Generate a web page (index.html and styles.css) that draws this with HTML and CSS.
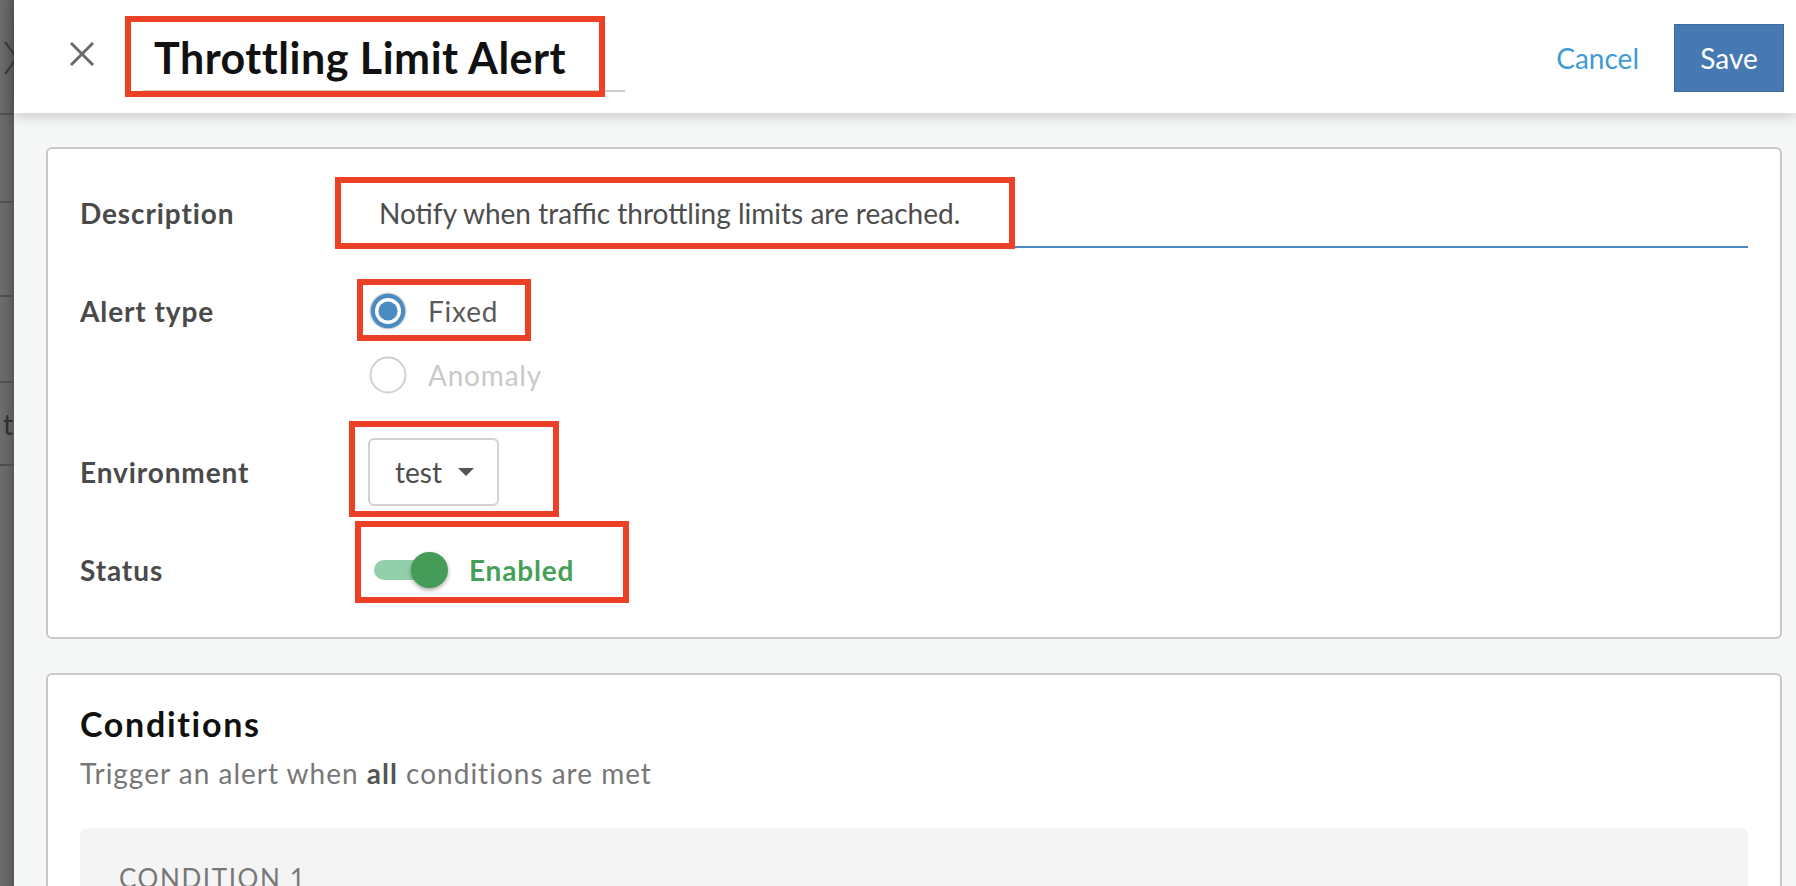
FILE: index.html
```html
<!DOCTYPE html>
<html lang="en">
<head>
<meta charset="utf-8">
<title>Throttling Limit Alert</title>
<link rel="stylesheet" href="styles.css">
</head>
<body>
<div class="screen">
  <aside class="backdrop">
    <div class="bd-row bd-row-1">
      <svg class="bd-x" width="14" height="113" viewBox="0 0 14 113"><path d="M5 42 L17 58 L5 74" fill="none" stroke="#3c3c3c" stroke-width="2.2"/></svg>
    </div>
    <div class="bd-row bd-row-2"></div>
    <div class="bd-row bd-row-3"></div>
    <div class="bd-row bd-row-4"></div>
    <div class="bd-row bd-row-5"><span class="bd-text">t</span></div>
  </aside>

  <div class="panel">
    <header class="topbar">
      <button class="close" aria-label="Close">
        <svg width="26" height="26" viewBox="0 0 26 26"><path d="M2 2 L24 24 M24 2 L2 24" stroke="#6a6a6a" stroke-width="3" fill="none"/></svg>
      </button>
      <div class="title-field">Throttling Limit Alert</div>
      <div class="spacer"></div>
      <a class="cancel">Cancel</a>
      <button class="save">Save</button>
    </header>

    <main class="content">
      <section class="card settings">
        <div class="label row-desc">Description</div>
        <div class="text-field row-desc">Notify when traffic throttling limits are reached.</div>

        <div class="label row-type">Alert type</div>
        <div class="radio-group">
          <div class="option">
            <svg width="38" height="38" viewBox="0 0 38 38"><circle cx="19" cy="19" r="18.5" fill="#cfcfcf"/><circle cx="19" cy="19" r="17.2" fill="#4a8cc2"/><circle cx="19" cy="19" r="13" fill="#ffffff"/><circle cx="19" cy="19" r="9.6" fill="#4a8cc2"/></svg>
            <span class="opt-text">Fixed</span>
          </div>
          <div class="option disabled">
            <svg width="38" height="38" viewBox="0 0 38 38"><circle cx="19" cy="19" r="17.5" fill="#ffffff" stroke="#d0d0d0" stroke-width="2"/></svg>
            <span class="opt-text">Anomaly</span>
          </div>
        </div>

        <div class="label row-env">Environment</div>
        <div class="field-cell">
          <div class="select">
            <span>test</span>
            <svg class="caret" width="16" height="8" viewBox="0 0 16 8"><path d="M0 0 H16 L8 8 Z" fill="#555"/></svg>
          </div>
        </div>

        <div class="label row-status">Status</div>
        <div class="field-cell status-cell">
          <div class="switch">
            <div class="track"></div>
            <div class="knob"></div>
          </div>
          <span class="enabled">Enabled</span>
        </div>
      </section>

      <section class="card conditions">
        <h2 class="cond-title">Conditions</h2>
        <p class="cond-sub">Trigger an alert when <b>all</b> conditions are met</p>
        <div class="cond-box">
          <div class="cond-name">CONDITION 1</div>
        </div>
      </section>
    </main>
  </div>

  <div class="mark mark-title"></div>
  <div class="mark mark-desc"></div>
  <div class="mark mark-type"></div>
  <div class="mark mark-env"></div>
  <div class="mark mark-status"></div>
</div>
</body>
</html>
```

FILE: styles.css
```css
* { box-sizing: border-box; }

html, body {
  margin: 0;
  padding: 0;
  width: 1796px;
  height: 886px;
  overflow: hidden;
  background: #f6f7f7;
  font-family: Lato, "Liberation Sans", sans-serif;
}

.screen {
  position: relative;
  display: flex;
  width: 1796px;
  height: 886px;
}

/* underlying page peeking through on the left */
.backdrop {
  width: 14px;
  flex: none;
  overflow: hidden;
  background: linear-gradient(90deg, #6d6d6d 0%, #646464 55%, #585858 100%);
}
.bd-row {
  border-bottom: 2px solid #4e4e4e;
  overflow: hidden;
}
.bd-row-1 { height: 115px; }
.bd-row-2 { height: 88px; }
.bd-row-3 { height: 94px; }
.bd-row-4 { height: 86px; }
.bd-row-5 { height: 83px; display: flex; align-items: center; }
.bd-x { display: block; }
.bd-text {
  margin-left: 3px;
  font-size: 28px;
  color: #2e2e2e;
  line-height: 34px;
}

.panel {
  flex: 1;
  display: flex;
  flex-direction: column;
  min-width: 0;
}

/* top bar */
.topbar {
  position: relative;
  z-index: 1;
  height: 113px;
  flex: none;
  padding-top: 3px;
  display: flex;
  align-items: center;
  background: #ffffff;
  box-shadow: 0 3px 14px rgba(0, 0, 0, 0.2);
}
.close {
  margin: 0 0 8px 55px;
  padding: 0;
  width: 26px;
  height: 26px;
  border: 0;
  background: none;
}
.close svg { display: block; }
.title-field {
  margin: 8px 0 0 48px;
  width: 482px;
  height: 60px;
  padding: 0 0 6px 11px;
  border-bottom: 2px solid #cdcdcd;
  font-size: 43px;
  font-weight: 700;
  line-height: 52px;
  letter-spacing: 0.5px;
  color: #111;
  white-space: nowrap;
}
.spacer { flex: 1; }
.cancel {
  margin-right: 35px;
  font-size: 28px;
  line-height: 34px;
  color: #3f9bd6;
}
.save {
  margin-right: 12px;
  width: 110px;
  height: 68px;
  padding: 0;
  border: 1px solid #3b6a9c;
  background: #4679b1;
  color: #ffffff;
  font-family: Lato, "Liberation Sans", sans-serif;
  font-size: 28px;
  line-height: 34px;
}

/* content */
.content {
  flex: 1;
  padding: 34px 14px 0 32px;
  display: flex;
  flex-direction: column;
  gap: 34px;
  overflow: hidden;
}
.card {
  background: #ffffff;
  border: 2px solid #c9c9c9;
  border-radius: 6px;
  flex: none;
}

.settings {
  display: grid;
  grid-template-columns: 288px 1fr;
  row-gap: 44px;
  padding: 29px 32px 47px 32px;
}
.label {
  font-size: 28px;
  font-weight: 700;
  line-height: 34px;
  letter-spacing: 0.9px;
  color: #4a4a4a;
  align-self: center;
}
.label.row-type { align-self: start; padding-top: 2px; }
.text-field {
  height: 70px;
  padding: 2px 0 0 11px;
  border-bottom: 2px solid #4a8abf;
  display: flex;
  align-items: center;
  font-size: 28px;
  line-height: 34px;
  color: #4d4d4d;
}

.radio-group {
  display: flex;
  flex-direction: column;
  gap: 26px;
}
.option {
  height: 38px;
  display: flex;
  align-items: center;
  gap: 21px;
  padding-left: 1px;
}
.option svg { display: block; flex: none; }
.opt-text {
  font-size: 28px;
  line-height: 34px;
  letter-spacing: 0.8px;
  color: #5a5a5a;
}
.option.disabled .opt-text { color: #c9c9c9; }

.field-cell {
  display: flex;
  align-items: center;
}
.select {
  height: 68px;
  display: flex;
  align-items: center;
  gap: 16px;
  padding: 0 23px 0 25px;
  border: 2px solid #d2d2d2;
  border-radius: 6px;
  font-size: 28px;
  line-height: 34px;
  color: #4d4d4d;
}
.caret { display: block; }

.status-cell { height: 40px; padding-left: 6px; }
.switch {
  position: relative;
  width: 74px;
  height: 36px;
  display: flex;
  align-items: center;
}
.track {
  width: 66px;
  height: 20px;
  border-radius: 10px;
  background: #93cfaa;
}
.knob {
  position: absolute;
  right: 0;
  top: 0;
  width: 37px;
  height: 36px;
  border-radius: 50%;
  background: #459c58;
  box-shadow: 0 2px 4px rgba(0, 0, 0, 0.35);
}
.enabled {
  margin-left: 21px;
  font-size: 28px;
  font-weight: 700;
  line-height: 34px;
  letter-spacing: 0.8px;
  color: #45a05b;
}

.conditions {
  padding: 29px 32px 0 32px;
  height: 400px;
}
.cond-title {
  margin: 0;
  font-size: 34px;
  font-weight: 700;
  line-height: 40px;
  letter-spacing: 1.7px;
  color: #111;
}
.cond-sub {
  margin: 12px 0 0 0;
  font-size: 28px;
  line-height: 34px;
  letter-spacing: 1px;
  color: #777;
}
.cond-sub b { color: #555; font-weight: 700; }
.cond-box {
  margin-top: 38px;
  min-height: 220px;
  padding: 34px 39px;
  background: #f4f4f4;
  border-radius: 6px;
}
.cond-name {
  font-size: 26px;
  line-height: 32px;
  letter-spacing: 1.6px;
  color: #777;
}

/* red annotation boxes drawn over the screenshot */
.mark {
  position: absolute;
  z-index: 5;
  border: 6px solid #ec4127;
  pointer-events: none;
}
.mark-title  { left: 125px; top: 16px;  width: 480px; height: 81px; }
.mark-desc   { left: 335px; top: 177px; width: 680px; height: 72px; }
.mark-type   { left: 357px; top: 279px; width: 174px; height: 62px; }
.mark-env    { left: 349px; top: 421px; width: 210px; height: 96px; }
.mark-status { left: 355px; top: 521px; width: 274px; height: 82px; }
```
